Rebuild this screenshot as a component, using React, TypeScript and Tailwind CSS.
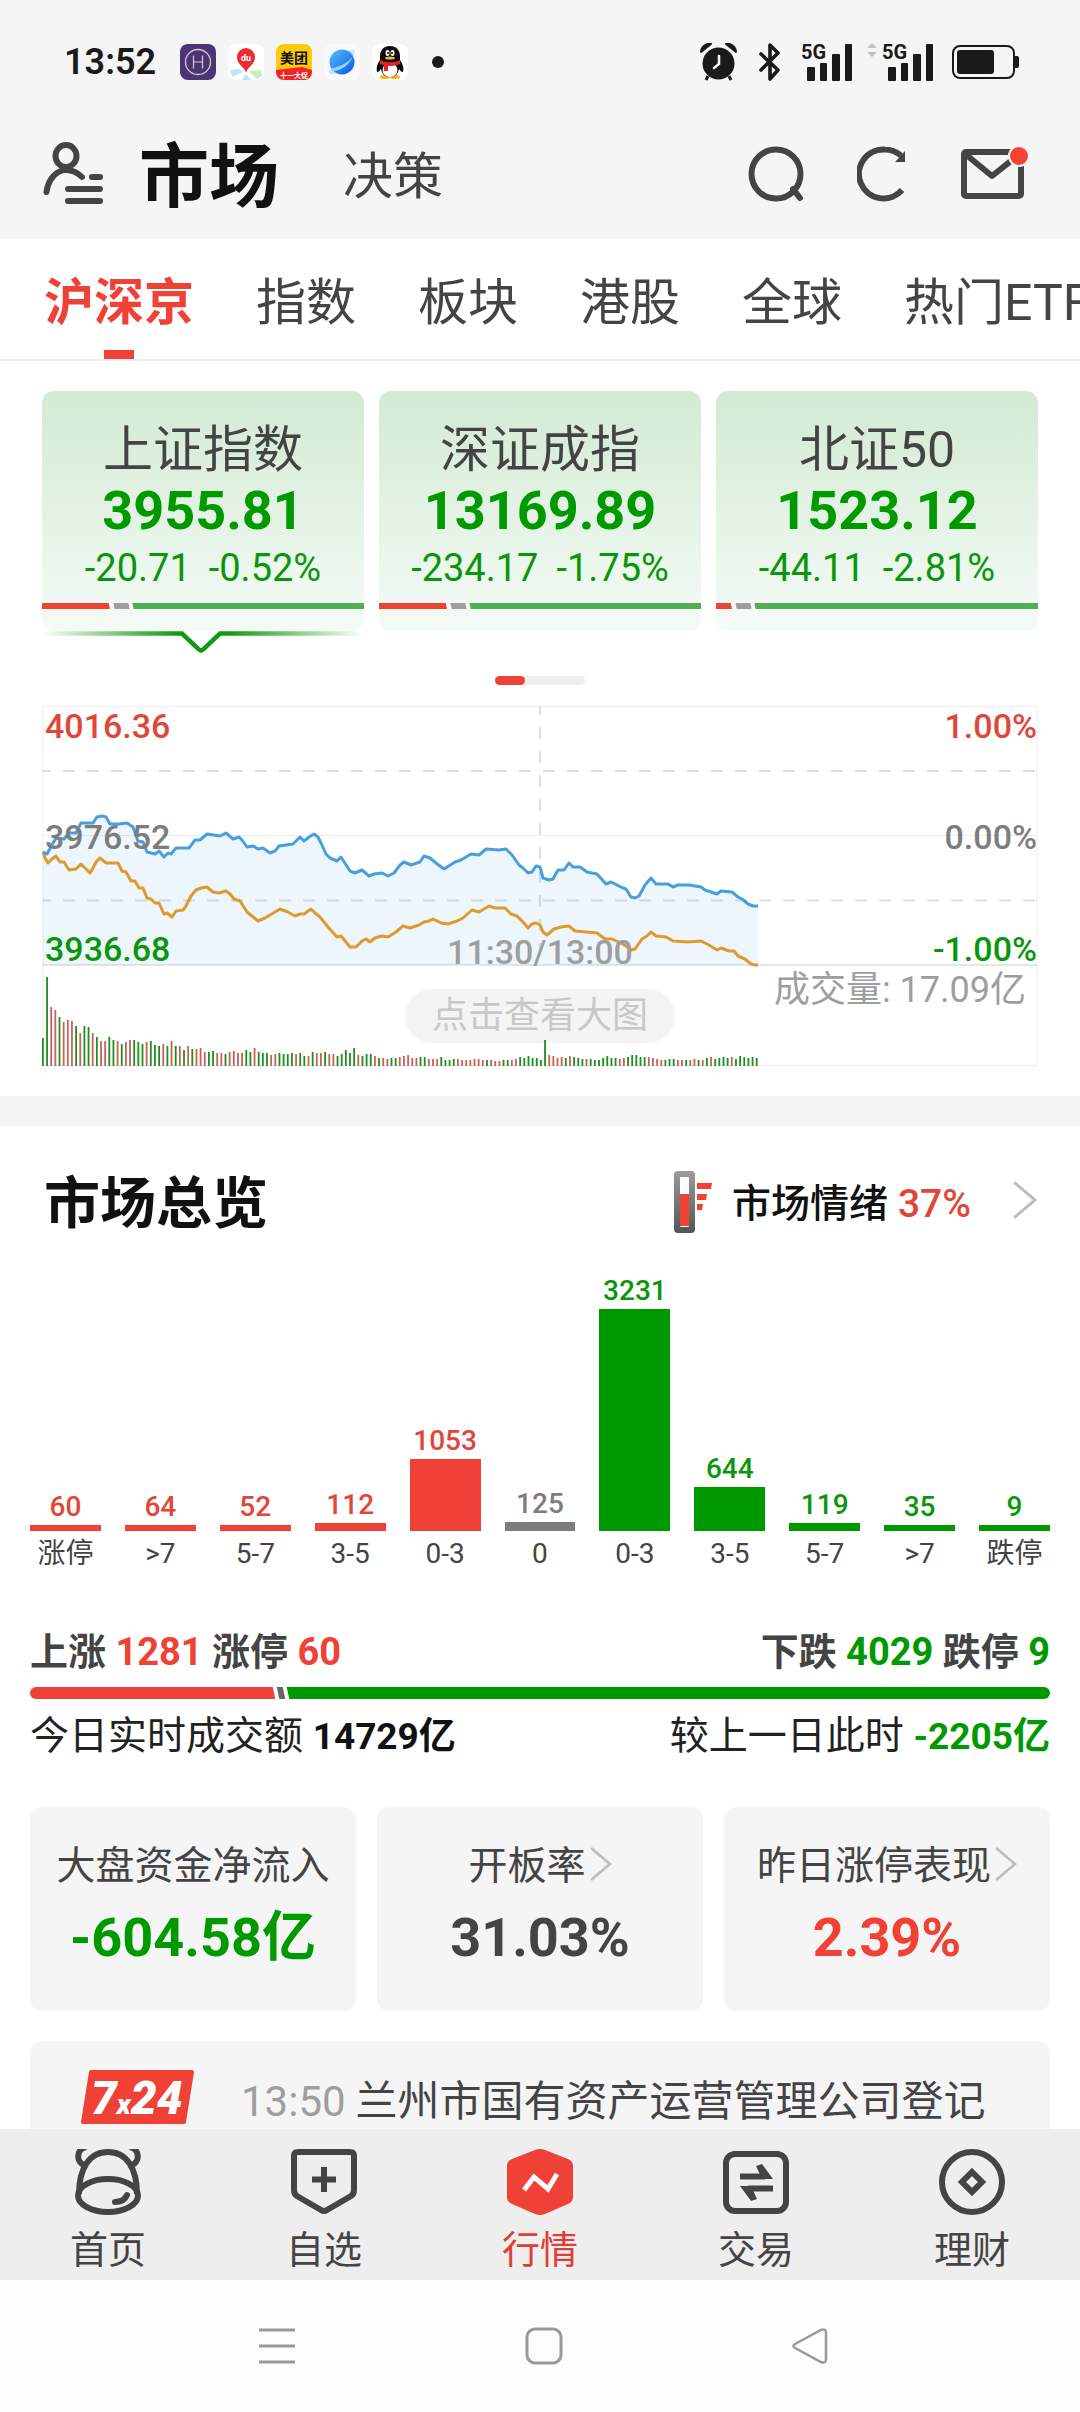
import { useState } from 'react';
import type { ReactNode } from 'react';

type Tone = 'up' | 'flat' | 'down';

interface IndexQuote {
  name: string;
  price: string;
  change: string;
  percent: string;
  upShare: number;
}

const tabs = ['沪深京', '指数', '板块', '港股', '全球', '热门ETF'];

const quotes: IndexQuote[] = [
  { name: '上证指数', price: '3955.81', change: '-20.71', percent: '-0.52%', upShare: 21 },
  { name: '深证成指', price: '13169.89', change: '-234.17', percent: '-1.75%', upShare: 21 },
  { name: '北证50', price: '1523.12', change: '-44.11', percent: '-2.81%', upShare: 5 },
];

const distribution: { label: string; count: number; tone: Tone }[] = [
  { label: '涨停', count: 60, tone: 'up' },
  { label: '>7', count: 64, tone: 'up' },
  { label: '5-7', count: 52, tone: 'up' },
  { label: '3-5', count: 112, tone: 'up' },
  { label: '0-3', count: 1053, tone: 'up' },
  { label: '0', count: 125, tone: 'flat' },
  { label: '0-3', count: 3231, tone: 'down' },
  { label: '3-5', count: 644, tone: 'down' },
  { label: '5-7', count: 119, tone: 'down' },
  { label: '>7', count: 35, tone: 'down' },
  { label: '跌停', count: 9, tone: 'down' },
];

const toneText: Record<Tone, string> = {
  up: 'text-[#e0463a]',
  flat: 'text-[#7d7d7d]',
  down: 'text-[#0a960a]',
};

const toneBg: Record<Tone, string> = {
  up: 'bg-[#ef4136]',
  flat: 'bg-[#7d7d7d]',
  down: 'bg-[#009900]',
};

const priceLine =
  '1,146 5,148 10,139 14,132 22,133 27,127 34,127 39,117 51,117 55,111 60,110 64,111 68,118 77,118 85,117 91,121 96,135 101,136 105,146 113,148 117,145 122,151 126,147 129,148 134,142 147,142 153,134 158,134 165,128 178,130 184,127 191,133 197,131 200,134 205,141 211,140 216,143 221,142 228,147 233,145 237,140 251,138 258,131 262,135 267,131 272,128 276,131 279,137 284,148 288,152 295,155 299,151 308,165 313,167 320,164 327,170 332,168 340,167 346,170 352,167 358,159 362,156 369,159 378,156 382,150 388,152 394,157 402,163 413,156 419,154 429,148 437,149 444,143 457,144 464,143 470,149 477,159 481,162 486,167 490,166 494,160 498,161 501,172 507,174 511,173 516,164 522,164 527,157 531,161 538,161 545,166 555,168 564,178 569,176 575,179 581,182 584,183 589,191 593,192 597,190 603,179 609,172 614,178 626,178 631,181 636,179 647,179 659,181 663,184 675,188 679,185 690,186 696,191 700,193 706,198 711,200 716,200';

const averageLine =
  '1,146 3,152 6,157 10,153 14,150 18,156 22,156 27,164 34,163 39,158 43,162 48,167 51,162 54,156 58,152 64,157 76,157 80,165 84,166 89,175 93,175 97,182 101,182 105,192 109,193 113,197 117,197 122,208 125,207 130,211 134,205 141,204 144,200 149,190 154,184 159,182 165,181 171,186 177,187 184,185 188,188 192,193 198,195 205,206 210,210 216,215 223,212 228,209 238,203 246,206 253,210 258,208 262,208 269,203 273,207 278,211 286,221 295,231 299,230 308,241 314,241 320,235 324,233 328,236 333,232 340,230 346,231 354,226 361,220 368,222 377,219 382,216 387,215 391,213 399,217 406,218 415,215 421,212 430,204 437,206 447,200 453,202 463,202 469,208 475,210 481,216 486,222 490,218 494,217 498,219 501,226 505,229 512,223 519,221 527,220 533,225 555,227 563,233 570,233 579,237 584,240 589,244 593,243 600,233 605,230 609,226 614,230 624,231 631,235 646,236 659,235 667,239 675,244 679,242 687,245 692,245 696,250 703,253 709,258 713,259 716,259';

// one bar per minute, 240 minutes in a trading day
const volumes = [
  28, 89, 59, 56, 49, 44, 46, 45, 40, 33, 40, 39, 33, 29, 25, 25, 29, 26, 25, 22, 24, 26, 26, 24, 22, 24, 25, 21, 20, 22,
  20, 25, 20, 20, 16, 20, 17, 17, 18, 14, 14, 15, 13, 13, 12, 14, 15, 13, 13, 16, 14, 18, 14, 13, 13, 11, 12, 13, 12, 12,
  13, 12, 13, 10, 10, 14, 13, 13, 14, 12, 12, 10, 12, 16, 13, 18, 11, 10, 12, 12, 10, 8, 8, 7, 8, 8, 9, 10, 11, 8, 8, 9,
  9, 7, 7, 7, 9, 6, 6, 7, 7, 6, 6, 6, 7, 7, 6, 6, 6, 5, 5, 6, 6, 6, 7, 9, 8, 10, 8, 8, 6, 26, 11, 10, 8, 9, 8, 10, 9, 8,
  7, 7, 7, 6, 6, 8, 10, 8, 8, 7, 8, 9, 11, 11, 9, 9, 9, 8, 7, 6, 6, 7, 7, 6, 6, 6, 6, 7, 6, 6, 8, 9, 7, 8, 9, 8, 9, 7, 10,
  9, 8, 9, 8, 5,
];

const volumeTones =
  'ggrrgrrrgrggrgrrggrgrrgggrgggrgrgrgrgrrrggrrgrrrrggrgggrrggggrggrgrrgrrgggggrgggrgrrggrrrrrggrrrggggrrrrrrrgrrrggrrgggggggrrrrgrgggrgggggggrrgggggrrrrgggrrgrrgrgrggggrggggggr';

const font = "font-[Roboto,'Noto_Sans_CJK_SC',sans-serif]";

function StatusBar() {
  return (
    <div className="flex h-[124px] items-center justify-between pr-[61px] pl-16 text-[#1a1a1a]">
      <div className="flex items-center">
        <span className="w-[116px] text-[36px] leading-10 font-semibold">13:52</span>
        <div className="flex items-center gap-3">
          <svg className="size-9" viewBox="0 0 36 36">
            <rect width="36" height="36" rx="8" fill="#4b3579" />
            <circle cx="18" cy="18" r="12.5" fill="none" stroke="#e5c9b4" strokeWidth="1.3" />
            <path d="M13.5 11.5v13M22.5 11.5v13M13.5 18h9" stroke="#e5c9b4" strokeWidth="1.2" />
          </svg>
          <svg className="size-9" viewBox="0 0 36 36">
            <rect width="36" height="36" rx="8" fill="#fff" />
            <path d="M2 26l9-1 4 3-11 5zM14 36l4-6 5 6z" fill="#bfe6f7" />
            <path d="M21 27l12-1 1 6-5 3z" fill="#c9efb8" />
            <path d="M18 29c-1-6-9-8-9-16a9 9 0 0118 0c0 8-8 10-9 16z" fill="#ee2b33" />
            <text x="18" y="17" fontSize="9" fontWeight="700" textAnchor="middle" fill="#fff">du</text>
          </svg>
          <svg className="size-9" viewBox="0 0 36 36">
            <clipPath id="meituan"><rect width="36" height="36" rx="8" /></clipPath>
            <g clipPath="url(#meituan)">
              <rect width="36" height="36" fill="#fccb0c" />
              <path d="M0 26l26-3 10 3v10H0z" fill="#f5222a" />
            </g>
            <text x="18" y="19" fontSize="14" fontWeight="700" textAnchor="middle" fill="#111">美团</text>
            <text x="18" y="34" fontSize="7" fontWeight="700" textAnchor="middle" fill="#fff">十一大促</text>
          </svg>
          <svg className="size-9" viewBox="0 0 36 36">
            <defs>
              <linearGradient id="planet" x1="0" y1="0" x2="1" y2="1">
                <stop offset="0" stopColor="#55c0ff" />
                <stop offset="1" stopColor="#0a55e0" />
              </linearGradient>
            </defs>
            <rect width="36" height="36" rx="8" fill="#f9fafb" />
            <ellipse cx="18" cy="18" rx="17" ry="5" transform="rotate(-44 18 18)" fill="#bfe5ff" />
            <circle cx="18" cy="18" r="12.5" fill="url(#planet)" />
            <path d="M7 24C15 24 26 17 29 12c-3 8-11 15-20 15z" fill="#8fd3ff" />
          </svg>
          <svg className="size-9" viewBox="0 0 36 36">
            <rect width="36" height="36" rx="8" fill="#fff" />
            <ellipse cx="13" cy="33" rx="5" ry="2" fill="#f9b418" />
            <ellipse cx="23" cy="33" rx="5" ry="2" fill="#f9b418" />
            <path d="M18 2c-6 0-10 4-10 10v4c-3 4-4 8-3 12 2 0 3-2 4-3 1 5 4 8 9 8s8-3 9-8c1 1 2 3 4 3 1-4 0-8-3-12v-4c0-6-4-10-10-10z" fill="#0a0a0a" />
            <ellipse cx="18" cy="26" rx="7.5" ry="7" fill="#fff" />
            <ellipse cx="15.5" cy="9" rx="2" ry="3" fill="#fff" />
            <ellipse cx="20.5" cy="9" rx="2" ry="3" fill="#fff" />
            <circle cx="16" cy="9" r="1" />
            <circle cx="20" cy="9" r="1" />
            <ellipse cx="18" cy="14" rx="5" ry="1.6" fill="#f9b418" />
            <path d="M8 16c6 3 14 3 20 0v4c-5 2-8 2-12 2v5h-4v-6c-2 0-3-1-4-1z" fill="#e5202a" />
          </svg>
        </div>
        <span className="ml-6 size-3 rounded-full bg-[#1a1a1a]" />
      </div>
      <div className="flex items-center">
        <svg className="h-[38px] w-[37px]" viewBox="0 0 37 38" fill="#1a1a1a">
          <circle cx="18.5" cy="20.5" r="16" />
          <path d="M1 9C1 4 6 0 11 1zM36 9C36 4 31 0 26 1z" stroke="#1a1a1a" strokeWidth="2" strokeLinejoin="round" />
          <path d="M8 33l-2 4M29 33l2 4" stroke="#1a1a1a" strokeWidth="3" />
          <path d="M19 13v8l-5 4" fill="none" stroke="#f5f5f5" strokeWidth="2.6" strokeLinecap="round" />
        </svg>
        <svg className="ml-[22px] h-[38px] w-[22px]" viewBox="0 0 22 38" fill="none" stroke="#1a1a1a" strokeWidth="3.6" strokeLinejoin="round" strokeLinecap="round">
          <path d="M2 11l17 16-8 9V2l8 8L2 27" />
        </svg>
        <Signal className="ml-5" />
        <svg className="mb-6 ml-[14px] h-[14px] w-[10px]" viewBox="0 0 10 14" fill="#c4c4c4">
          <path d="M5 0l5 5H0zM5 14l5-5H0z" />
        </svg>
        <Signal className="ml-[5px]" />
        <svg className="ml-[18px] h-[34px] w-[67px]" viewBox="0 0 67 34">
          <rect x="1" y="1" width="61" height="32" rx="7" fill="none" stroke="#1a1a1a" strokeWidth="2" />
          <rect x="5" y="5" width="37" height="24" rx="3" fill="#1a1a1a" />
          <path d="M63 11h2a2 2 0 012 2v8a2 2 0 01-2 2h-2z" fill="#1a1a1a" />
        </svg>
      </div>
    </div>
  );
}

function Signal({ className }: { className: string }) {
  return (
    <svg className={`h-[38px] w-[52px] overflow-visible ${className}`} viewBox="0 0 52 38" fill="#1a1a1a">
      <text x="0" y="16" fontSize="20" fontWeight="700">5G</text>
      <rect x="6" y="24" width="8" height="14" rx="1" />
      <rect x="19" y="20" width="7" height="18" rx="1" />
      <rect x="31" y="11" width="8" height="27" rx="1" />
      <rect x="44" y="1" width="7" height="37" rx="1" />
    </svg>
  );
}

function Header() {
  return (
    <header className="flex h-[115px] items-center justify-between pb-3 pr-[54px] pl-[43px]">
      <div className="flex items-center">
        <button type="button" aria-label="我的" className="pb-1">
          <svg className="h-[64px] w-[62px]" viewBox="0 0 62 64" fill="none" stroke="#444" strokeWidth="6" strokeLinecap="round">
            <ellipse cx="23" cy="14" rx="10.5" ry="11" />
            <path d="M3.5 50C5 38 13 28 23 28c7 0 12 3 16 7M49 35h8M25 47h32M25 59h32" />
          </svg>
        </button>
        <h1 className="ml-[34px] pt-1 text-[70px] leading-[90px] font-bold text-[#111]">市场</h1>
        <a href="#decision" className="ml-[64px] pt-[2px] text-[50px] leading-[60px] text-[#444]">决策</a>
      </div>
      <div className="flex items-center gap-[53px] pb-1">
        <button type="button" aria-label="搜索">
          <svg className="size-14" viewBox="0 0 56 56" fill="none" stroke="#444" strokeWidth="6">
            <circle cx="28" cy="28" r="24.5" />
            <path d="M45 43l7 9" strokeLinecap="round" />
          </svg>
        </button>
        <button type="button" aria-label="刷新">
          <svg className="h-14 w-[50px]" viewBox="0 0 50 56">
            <path d="M45 44A24.5 24.5 0 1128 3.5c6 0 11 2 16 6" fill="none" stroke="#444" strokeWidth="6" />
            <path d="M48 5v11H38z" fill="#444" />
          </svg>
        </button>
        <button type="button" aria-label="消息" className="relative">
          <svg className="h-[50px] w-[66px]" viewBox="0 0 66 50" fill="none" stroke="#444" strokeWidth="6" strokeLinejoin="round">
            <rect x="4" y="3" width="57" height="44" rx="2" />
            <path d="M4 4l28 23L61 4" />
          </svg>
          <span className="absolute -top-1 -right-1 size-[22px] rounded-full border-2 border-[#f5f5f5] bg-[#f44336]" />
        </button>
      </div>
    </header>
  );
}

function TabBar() {
  const [active, setActive] = useState('沪深京');

  return (
    <nav className="flex h-[122px] gap-[62px] overflow-hidden border-b-2 border-[#ececec] bg-white pl-11 text-[50px] text-[#444]">
      {tabs.map((tab) => (
        <button
          key={tab}
          type="button"
          onClick={() => setActive(tab)}
          className={`flex shrink-0 flex-col items-center justify-between pt-[34px] whitespace-nowrap ${active === tab ? 'font-bold text-[#ef4136]' : ''}`}
        >
          <span className="leading-[60px]">{tab}</span>
          {active === tab && <span className="h-[9px] w-[30px] bg-[#ef4136]" />}
        </button>
      ))}
    </nav>
  );
}

function IndexCard({ quote, selected }: { quote: IndexQuote; selected: boolean }) {
  return (
    <div className="flex-1">
      <button type="button" className="block w-full rounded-xl bg-linear-to-b from-[#d2ead4] to-[#f5fbf6] pt-7 pb-[22px] text-center">
        <span className="block text-[50px] leading-[62px] text-[#444]">{quote.name}</span>
        <span className="block text-[54px] leading-[60px] font-bold text-[#009900]">{quote.price}</span>
        <span className="flex justify-center gap-[18px] text-[38px] leading-[54px] whitespace-nowrap text-[#0a960a]">
          <span>{quote.change}</span>
          <span>{quote.percent}</span>
        </span>
        <span className="mt-2 flex h-[6px] gap-1 overflow-hidden bg-white/80">
          <span className="origin-bottom-right skew-x-12 bg-[#e84536]" style={{ width: `${quote.upShare}%` }} />
          <span className="w-[15px] skew-x-12 bg-[#9e9e9e]" />
          <span className="-mr-1 flex-1 skew-x-12 bg-[#52ae55]" />
        </span>
      </button>
      {selected && (
        <svg className="block h-[23px] w-full" viewBox="0 0 322 23" preserveAspectRatio="none">
          <defs>
            <linearGradient id="notch" gradientUnits="userSpaceOnUse" x1="0" y1="0" x2="322" y2="0">
              <stop offset="0" stopColor="#129912" stopOpacity="0" />
              <stop offset="0.42" stopColor="#129912" />
              <stop offset="0.58" stopColor="#129912" />
              <stop offset="1" stopColor="#129912" stopOpacity="0" />
            </linearGradient>
          </defs>
          <path d="M0 2.5h140l17 16q2 2 4 0l17-16h144" fill="none" stroke="url(#notch)" strokeWidth="4.5" />
        </svg>
      )}
    </div>
  );
}

function IntradayChart() {
  const step = 996 / 240;

  return (
    <div className="relative mt-[21px] h-[360px] text-[34px] leading-10 font-medium">
      <svg className="block h-full w-full" viewBox="0 0 996 360" preserveAspectRatio="none">
        <path d="M1 0.5H995V359.5H1z" fill="none" stroke="#ededed" strokeWidth="1" />
        <path d="M0 129.5h996" stroke="#ececec" strokeWidth="1" />
        <path d="M0 259h996" stroke="#e6e6e6" strokeWidth="2" />
        <path d="M0 65h996M0 194.5h996" stroke="#dedede" strokeWidth="2" strokeDasharray="12 12" strokeDashoffset="3" />
        <path d="M498 0v260" stroke="#dedede" strokeWidth="2" strokeDasharray="12 12" strokeDashoffset="3" />
        <polygon points={`1,259 ${priceLine} 716,259`} fill="#3b9de8" fillOpacity="0.09" />
        <polyline points={averageLine} fill="none" stroke="#e09a2b" strokeWidth="3" strokeLinejoin="round" />
        <polyline points={priceLine} fill="none" stroke="#489fe0" strokeWidth="3" strokeLinejoin="round" />
      </svg>
      <span className="absolute top-0 left-[3px] text-[#e0463a]">4016.36</span>
      <span className="absolute top-[111px] left-[3px] text-[#7d7d7d]">3976.52</span>
      <span className="absolute top-[223px] left-[3px] text-[#0a960a]">3936.68</span>
      <span className="absolute top-0 right-px text-[#e0463a]">1.00%</span>
      <span className="absolute top-[111px] right-px text-[#7d7d7d]">0.00%</span>
      <span className="absolute top-[223px] right-px text-[#0a960a]">-1.00%</span>
      <span className="absolute top-[226px] left-1/2 -translate-x-1/2 text-[#9e9e9e]">11:30/13:00</span>
      <span className="absolute top-[262px] right-3 text-[36px] leading-[44px] font-normal text-[#9e9e9e]">成交量: 17.09亿</span>
      <button
        type="button"
        className="absolute top-[283px] left-1/2 h-[54px] w-[270px] -translate-x-1/2 rounded-full bg-[#f4f4f4] text-[36px] leading-[54px] font-normal text-[#c8c8c8]"
      >
        点击查看大图
      </button>
      <svg className="pointer-events-none absolute bottom-0 left-0 h-[100px] w-full" viewBox="0 0 996 100" preserveAspectRatio="none">
        {volumes.slice(0, 173).map((v, i) => (
          <rect key={i} x={i * step} y={100 - v} width="1.8" height={v} fill={volumeTones[i] === 'r' ? '#c9605a' : '#1e8e1e'} />
        ))}
      </svg>
    </div>
  );
}

function Chevron({ className }: { className: string }) {
  return (
    <svg className={className} viewBox="0 0 24 38" fill="none" stroke="#bdbdbd" strokeWidth="3" strokeLinecap="round">
      <path d="M2 2l20 17L2 36" />
    </svg>
  );
}

function StatCard({ title, value, tone, link = false }: { title: string; value: string; tone: string; link?: boolean }) {
  return (
    <button type="button" className="flex-1 rounded-xl bg-[#f5f5f5] pt-[34px] pb-[43px]">
      <span className="flex items-center justify-center gap-1 text-[39px] leading-[50px] whitespace-nowrap text-[#444]">
        {title}
        {link && <Chevron className="mb-1 h-[34px] w-[22px]" />}
      </span>
      <span className={`mt-[17px] block text-[54px] leading-[60px] font-bold ${tone}`}>{value}</span>
    </button>
  );
}

function Overview() {
  return (
    <section className="px-[30px]">
      <div className="flex h-[147px] items-center justify-between pt-2 pr-[13px] pl-[14px]">
        <h2 className="text-[56px] leading-[70px] font-bold text-[#111]">市场总览</h2>
        <a href="#sentiment" className="flex items-center text-[39px] leading-[50px] font-medium text-[#111]">
          <svg className="mr-5 mb-1 h-[62px] w-[38px]" viewBox="0 0 38 62">
            <defs>
              <linearGradient id="tube" x1="0" y1="0" x2="0" y2="1">
                <stop offset="0" stopColor="#9b9b9b" />
                <stop offset="1" stopColor="#555" />
              </linearGradient>
            </defs>
            <rect x="0" y="0" width="21" height="62" rx="4" fill="url(#tube)" />
            <rect x="6" y="6" width="9" height="50" rx="1" fill="#fff" />
            <path d="M6 23h9v32H6z" fill="#ef4136" />
            <path d="M23 12h15l-1 6H23zM23 23h10l-1 6h-9zM23 33h6l-1 6h-5z" fill="#ef4136" />
          </svg>
          <span>市场情绪</span>
          <span className="ml-[10px] text-[#e0463a]">37%</span>
          <Chevron className="mb-2 ml-[42px] h-[38px] w-6" />
        </a>
      </div>

      <div className="flex h-[298px] items-end gap-6">
        {distribution.map(({ label, count, tone }, i) => (
          <div key={i} className="flex flex-1 flex-col items-stretch text-center text-[28px]">
            <span className={`leading-9 font-medium ${toneText[tone]}`}>{count}</span>
            <span className={toneBg[tone]} style={{ height: Math.max(6, Math.round(count * 0.0687)) }} />
            <span className="mt-[6px] leading-[34px] whitespace-nowrap text-[#444]">{label}</span>
          </div>
        ))}
      </div>

      <div className="mt-14 flex justify-between text-[38px] leading-[50px] font-bold text-[#444]">
        <p>
          上涨 <span className="text-[#ef4136]">1281</span> 涨停 <span className="text-[#ef4136]">60</span>
        </p>
        <p>
          下跌 <span className="text-[#009900]">4029</span> 跌停 <span className="text-[#009900]">9</span>
        </p>
      </div>
      <div className="mt-[10px] flex h-3 gap-1 overflow-hidden rounded-full">
        <span className="-ml-1 w-[248px] skew-x-12 bg-[#ef4136]" />
        <span className="w-[6px] skew-x-12 bg-[#666]" />
        <span className="-mr-1 flex-1 skew-x-12 bg-[#009900]" />
      </div>
      <div className="mt-3 flex justify-between text-[39px] leading-[50px] text-[#222]">
        <p>
          今日实时成交额 <b className="text-[37px] text-[#111]">14729亿</b>
        </p>
        <p>
          较上一日此时 <b className="text-[37px] text-[#009900]">-2205亿</b>
        </p>
      </div>

      <div className="mt-[45px] flex gap-[21px]">
        <StatCard title="大盘资金净流入" value="-604.58亿" tone="text-[#009900]" />
        <StatCard title="开板率" value="31.03%" tone="text-[#444]" link />
        <StatCard title="昨日涨停表现" value="2.39%" tone="text-[#ef4136]" link />
      </div>

      <a href="#news" className="mt-[30px] flex items-start rounded-xl bg-[#f5f5f5] pt-[29px] pb-24 pl-[51px] whitespace-nowrap">
        <svg className="h-[54px] w-[113px] overflow-visible" viewBox="0 0 113 54">
          <path d="M10 0H111q2 0 2 2l-8 50q0 2-2 2H2q-2 0-2-2L8 2q0-2 2-2z" fill="#ef4136" />
          <text x="10" y="44" fill="#fff" fontWeight="900" fontStyle="italic" fontSize="46">
            7<tspan fontSize="28">x</tspan>24
          </text>
        </svg>
        <span className="ml-[47px] pt-[2px] text-[42px] leading-[60px] text-[#9e9e9e]">13:50</span>
        <span className="ml-[10px] pt-[2px] text-[42px] leading-[60px] text-[#444]">兰州市国有资产运营管理公司登记</span>
      </a>
    </section>
  );
}

function NavItem({ label, active = false, children }: { label: string; active?: boolean; children: ReactNode }) {
  return (
    <a href={`#${label}`} className={`flex flex-1 flex-col items-center ${active ? 'text-[#e03c36]' : 'text-[#444]'}`}>
      <svg className="size-[66px]" viewBox="0 0 66 66" fill="none" stroke="currentColor" strokeWidth="6">
        {children}
      </svg>
      <span className="mt-[10px] text-[38px] leading-[50px]">{label}</span>
    </a>
  );
}

function BottomNav() {
  return (
    <nav className="flex h-[151px] shrink-0 bg-[#eee] pt-5">
      <NavItem label="首页">
        <path d="M4 45C4 20 14 3 33 3s29 17 29 42" />
        <ellipse cx="33" cy="46.5" rx="30" ry="16.5" />
        <path d="M11-2C1 0 1 13 9 16M55-2c10 2 10 15 2 18" />
        <path d="M40 53q9 0 12-7" strokeLinecap="round" />
      </NavItem>
      <NavItem label="自选">
        <path d="M7 3h52q4 0 4 4v34q0 4-3 6L36 61q-3 2-6 0L6 47q-3-2-3-6V7q0-4 4-4z" />
        <path d="M21 30.5h24M33 18v25" />
      </NavItem>
      <NavItem label="行情" active>
        <path d="M28 1q5-2 10 0l23 9q5 2 5 7v31q0 5-5 7l-23 10q-5 2-10 0L5 55q-5-2-5-7V17q0-5 5-7z" fill="#ef4136" stroke="none" />
        <path d="M17 41l10-13 14 12 9-15" stroke="#fff" strokeWidth="5" />
      </NavItem>
      <NavItem label="交易">
        <rect x="3" y="5" width="60" height="57" rx="9" />
        <path d="M17 27.5h25M25 39.5h25" />
        <path d="M33 17l6-2 11 15H39zM34 50l-6 2-11-15h11z" fill="currentColor" stroke="none" />
      </NavItem>
      <NavItem label="理财">
        <circle cx="33" cy="33" r="30" />
        <path d="M33 23l10 10-10 10-10-10z" />
      </NavItem>
    </nav>
  );
}

function SystemNav() {
  return (
    <div className="flex h-[132px] shrink-0 items-center justify-center gap-[229px] bg-[#fdfdfd] pl-2">
      <button type="button" aria-label="最近任务">
        <svg className="size-[38px]" viewBox="0 0 38 38" stroke="#9a9a9a" strokeWidth="3">
          <path d="M1 3h36M1 19h36M1 35h36" />
        </svg>
      </button>
      <button type="button" aria-label="主屏幕">
        <svg className="size-[38px]" viewBox="0 0 38 38" fill="none" stroke="#9a9a9a" strokeWidth="3">
          <rect x="2" y="2" width="34" height="34" rx="8" />
        </svg>
      </button>
      <button type="button" aria-label="返回">
        <svg className="size-[38px]" viewBox="0 0 38 38" fill="none" stroke="#9a9a9a" strokeWidth="2.5">
          <path d="M3 17L29 3q5-2 5 3v26q0 5-5 3L3 21q-3-2 0-4z" />
        </svg>
      </button>
    </div>
  );
}

export default function App() {
  return (
    <div className={`flex h-screen flex-col overflow-hidden bg-white ${font}`}>
      <div className="shrink-0 bg-[#f5f5f5]">
        <StatusBar />
        <Header />
      </div>
      <main className="min-h-0 flex-1 overflow-hidden">
        <TabBar />
        <section className="px-[42px] py-[30px]">
          <div className="flex gap-[15px]">
            {quotes.map((quote, i) => (
              <IndexCard key={quote.name} quote={quote} selected={i === 0} />
            ))}
          </div>
          {/* pager */}
          <div className="mx-auto mt-[22px] h-[9px] w-[90px] rounded-full bg-[#eee]">
            <div className="h-full w-[30px] rounded-full bg-[#ef4136]" />
          </div>
          <IntradayChart />
        </section>
        <div className="h-[30px] bg-[#f5f5f5]" />
        <Overview />
      </main>
      <BottomNav />
      <SystemNav />
    </div>
  );
}
